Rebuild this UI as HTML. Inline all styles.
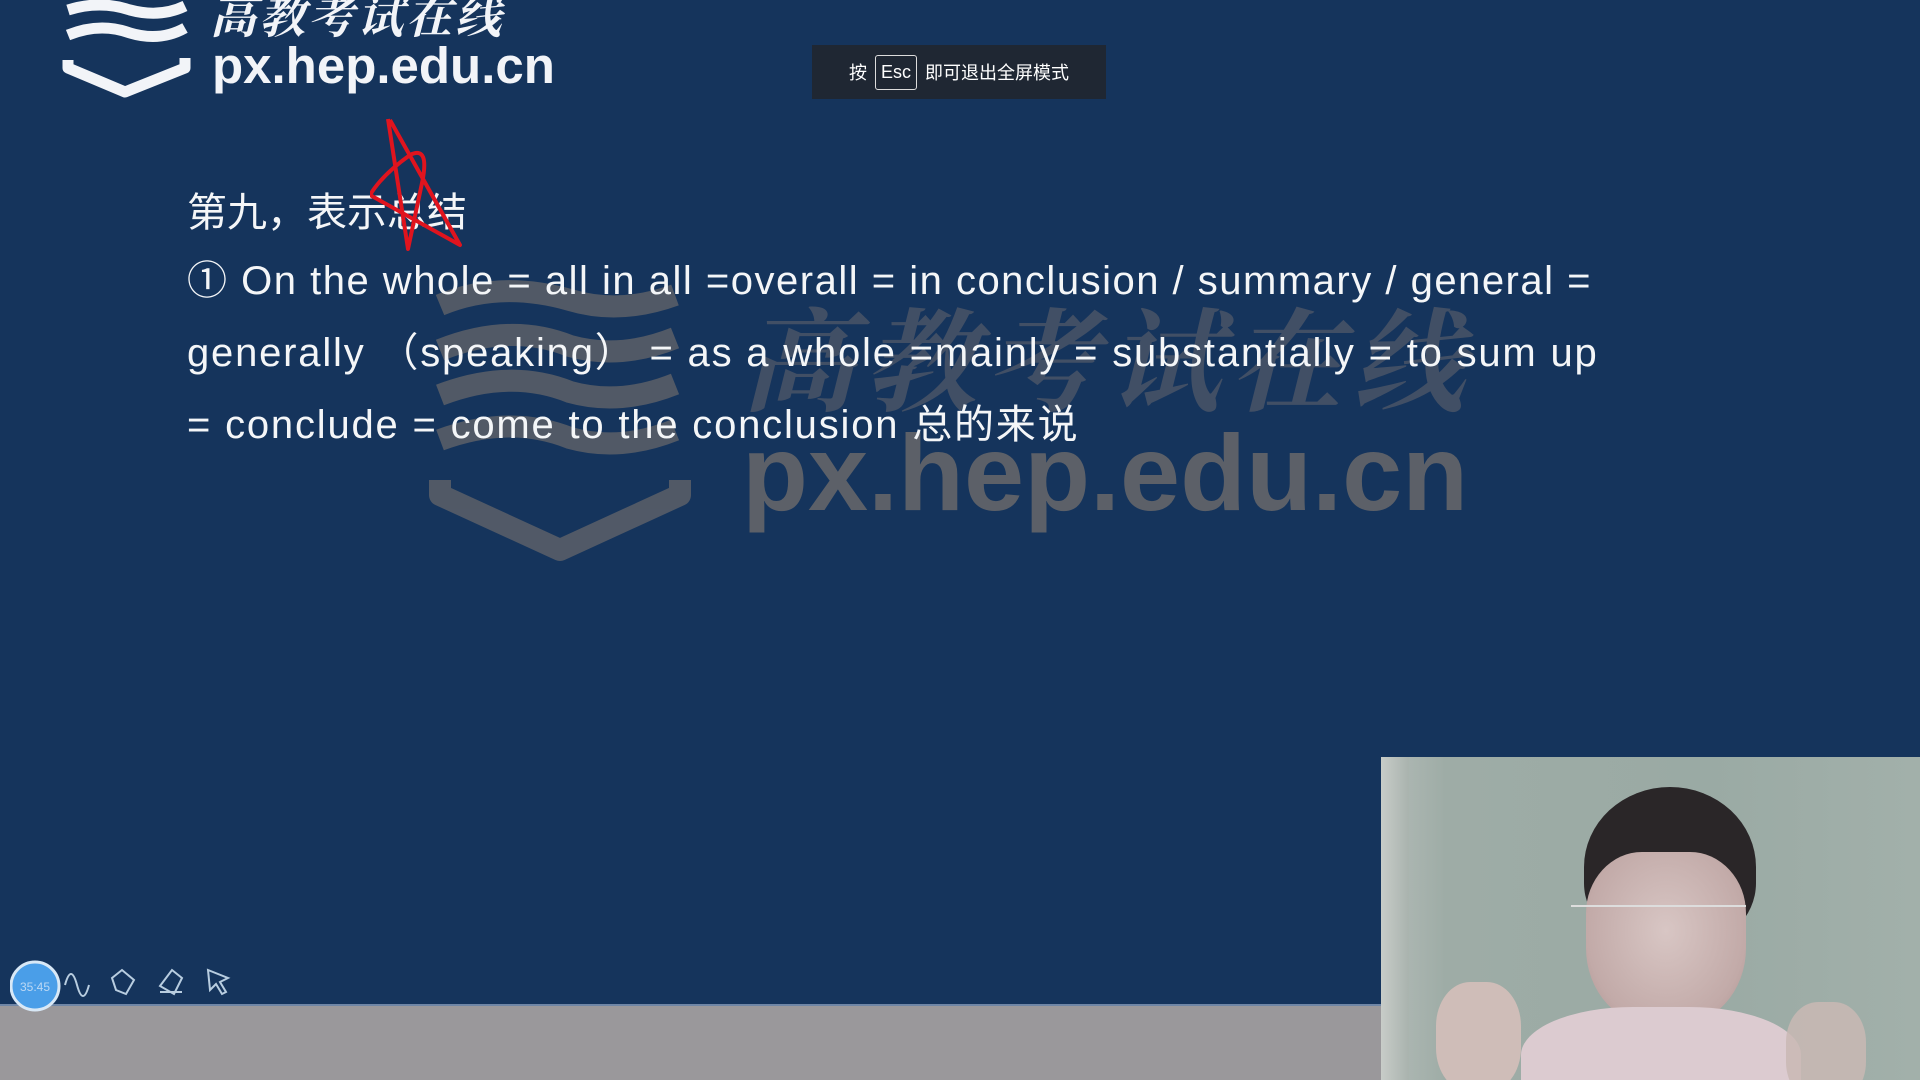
<!DOCTYPE html>
<html><head><meta charset="utf-8"><style>
*{margin:0;padding:0;box-sizing:border-box}
body{width:1920px;height:1080px;overflow:hidden;background:#15345c;position:relative;font-family:"Liberation Sans","Noto Sans CJK SC",sans-serif;color:#fff}
.abs{position:absolute}
.line{position:absolute;left:187px;font-size:40px;white-space:nowrap;color:#f4f6f8;letter-spacing:1.5px}
</style></head><body>
<!-- watermark -->
<svg class="abs" style="left:420px;top:280px" width="1100" height="290">
 <g fill="none" stroke="#5c6068" stroke-width="22" stroke-linejoin="round" opacity="0.85">
  <path d="M20 25 Q80 0 150 20 Q200 35 255 15"/>
  <path d="M20 70 Q90 42 150 66 Q200 80 255 58"/>
  <path d="M20 115 Q90 88 150 112 Q200 126 255 104"/>
  <path d="M20 160 Q90 134 150 158 Q200 172 255 150"/>
  <path d="M20 200 L20 215 L140 270 L260 215 L260 200"/>
 </g>
 <text x="322" y="230" font-family="Liberation Sans" font-weight="bold" font-size="108" fill="#5c6068">px.hep.edu.cn</text>
 <text x="322" y="122" font-family="Noto Serif CJK SC" font-weight="bold" font-size="112" fill="#4d5668" letter-spacing="10" font-style="italic" opacity="0.8">高教考试在线</text>
</svg>
<!-- logo -->
<svg class="abs" style="left:60px;top:0" width="520" height="100">
 <g fill="none" stroke="#f2f4f8" stroke-width="11" stroke-linejoin="round">
  <path d="M8 10 Q40 0 70 10 Q100 18 125 6"/>
  <path d="M8 35 Q40 22 70 33 Q100 42 125 28"/>
  <path d="M8 60 L8 68 L65 92 L125 68 L125 58"/>
 </g>
 <text x="150" y="33" font-family="Noto Serif CJK SC" font-weight="bold" font-size="46" fill="#f2f4f8" font-style="italic" letter-spacing="3">高教考试在线</text>
 <text x="152" y="83" font-family="Liberation Sans" font-weight="bold" font-size="51" fill="#f2f4f8">px.hep.edu.cn</text>
</svg>
<!-- esc toast -->
<div class="abs" style="left:812px;top:45px;width:294px;height:54px;background:#1f2733;font-size:18px;display:flex;align-items:center;justify-content:center;gap:8px">按<span style="border:1px solid #ddd;border-radius:3px;padding:6px 5px">Esc</span>即可退出全屏模式</div>
<!-- content -->
<div class="line" style="top:180px;letter-spacing:0">第九，表示总结</div>
<div class="line" style="top:248px">① On the whole = all in all =overall = in conclusion / summary / general =</div>
<div class="line" style="top:320px;letter-spacing:1.8px">generally （speaking） = as a whole =mainly = substantially = to sum up</div>
<div class="line" style="top:392px;letter-spacing:1.8px">= conclude = come to the conclusion 总的来说</div>
<!-- red star -->
<svg class="abs" style="left:370px;top:115px" width="100" height="140">
 <path d="M18 4 L38 134 L52 68 Q60 30 40 40 Q12 60 0 80 L90 130 L20 5" fill="none" stroke="#e0141e" stroke-width="4" stroke-linejoin="round"/>
</svg>
<!-- bottom gray -->
<div class="abs" style="left:0;top:1004px;width:1381px;height:76px;background:#9a989b;border-top:2px solid #6f86a6"></div>
<!-- toolbar -->
<svg class="abs" style="left:10px;top:950px" width="230" height="70">
 <g fill="none" stroke="#b8cde0" stroke-width="2">
  <path d="M55 35 q6 -22 12 0 q6 22 12 0"/>
  <path d="M102 28 l10 -8 l12 10 l-8 14 l-10 -4z"/>
  <path d="M150 36 l12 -16 l10 8 l-8 16z M150 42 h22"/>
  <path d="M198 20 l20 8 l-8 4 l6 10 l-4 2 l-6 -10 l-6 6z"/>
 </g>
 <circle cx="25" cy="36" r="24" fill="#4a9ee8" stroke="#d8e8f6" stroke-width="3"/>
 <text x="25" y="41" font-size="12" fill="#bcd8f4" text-anchor="middle">35:45</text>
</svg>
<!-- video -->
<div class="abs" style="left:1381px;top:757px;width:539px;height:323px;overflow:hidden;background:linear-gradient(90deg,#b4bcb8 0%,#9eaca6 12%,#9aaaa4 60%,#a2b0aa 100%)">
 <div class="abs" style="left:0;top:0;width:28px;height:323px;background:linear-gradient(90deg,#c8ccc8,#a9b3ae)"></div>
 <div class="abs" style="left:203px;top:30px;width:172px;height:160px;border-radius:50% 50% 40% 40%;background:#2a2628"></div>
 <div class="abs" style="left:205px;top:95px;width:160px;height:175px;border-radius:35% 35% 45% 45%;background:radial-gradient(ellipse at 50% 45%,#d8c6c4,#c2aaa8 70%,#a88e8c)"></div>
 <div class="abs" style="left:140px;top:250px;width:280px;height:120px;border-radius:40% 40% 0 0;background:#dccbd0"></div>
 <div class="abs" style="left:55px;top:225px;width:85px;height:110px;border-radius:40%;background:#cfbdb8"></div>
 <div class="abs" style="left:405px;top:245px;width:80px;height:100px;border-radius:40%;background:#c9b8b4;opacity:.85"></div>
 <div class="abs" style="left:190px;top:148px;width:175px;height:2px;background:#ddd"></div>
</div>
</body></html>
